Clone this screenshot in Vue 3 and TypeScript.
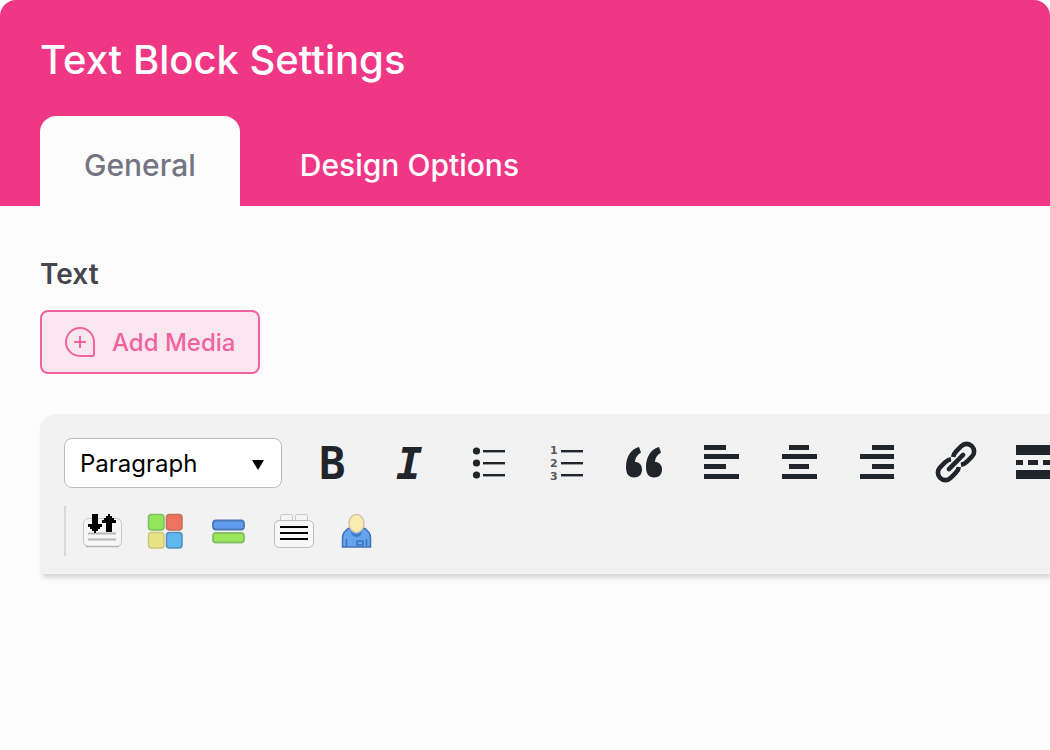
<script setup lang="ts">
import { ref } from 'vue'

const tabs: string[] = ['General', 'Design Options']
const activeTab = ref<string>('General')
const format = ref<string>('Paragraph')

interface Bar { x: number; y: number; w: number; h: number }
interface Tool { name: string; bars: Bar[] }

const lines = (xs: number[], ws: number[]): Bar[] =>
  xs.map((x, i) => ({ x, y: [7, 16, 26, 36][i], w: ws[i], h: 5 }))

const listLines: Bar[] = [12, 24, 36].map((y) => ({ x: 33, y, w: 22, h: 2.4 }))

const tools: Tool[] = [
  { name: 'Bold', bars: [] },
  { name: 'Italic', bars: [] },
  { name: 'Bulleted list', bars: listLines },
  { name: 'Numbered list', bars: listLines },
  { name: 'Blockquote', bars: [] },
  { name: 'Align left', bars: lines([20, 20, 20, 20], [22, 35, 22, 35]) },
  { name: 'Align center', bars: lines([27, 20, 27, 20], [20, 35, 20, 35]) },
  { name: 'Align right', bars: lines([32, 20, 32, 20], [22, 34, 22, 34]) },
  { name: 'Insert link', bars: [] },
  {
    name: 'Read more',
    bars: [
      { x: 20, y: 7, w: 38, h: 10 },
      { x: 20, y: 22, w: 7, h: 5 },
      { x: 32, y: 22, w: 10, h: 5 },
      { x: 47, y: 22, w: 11, h: 5 },
      { x: 20, y: 32, w: 38, h: 9 },
    ],
  },
]
</script>

<template>
  <main class="panel">
    <header class="head">
      <h1>Text Block Settings</h1>
      <nav class="tabs" role="tablist">
        <button
          v-for="tab in tabs"
          :key="tab"
          type="button"
          role="tab"
          class="tab"
          :class="{ active: tab === activeTab }"
          :aria-selected="tab === activeTab"
          @click="activeTab = tab"
        >{{ tab }}</button>
      </nav>
    </header>

    <section class="body">
      <h2>Text</h2>
      <button type="button" class="media">
        <svg width="32" height="32" viewBox="0 0 32 32" fill="none" stroke="currentColor" stroke-width="2" aria-hidden="true">
          <path d="M16 2a14 14 0 0 0 0 28h12a2 2 0 0 0 2-2V16A14 14 0 0 0 16 2z" />
          <path d="M16 10v12M10 16h12" />
        </svg>
        <span>Add Media</span>
      </button>

      <div class="toolbar" role="toolbar" aria-label="Text formatting">
        <div class="row">
          <div class="select">
            <select v-model="format" aria-label="Block format">
              <option>Paragraph</option>
              <option>Heading</option>
            </select>
            <svg class="caret" width="12" height="10" viewBox="0 0 12 10" aria-hidden="true"><path d="M0 0h12L6 10z" /></svg>
          </div>
          <button v-for="tool in tools" :key="tool.name" type="button" class="tool" :aria-label="tool.name">
            <svg width="78" height="50" viewBox="0 0 78 50" fill="#1f252b" aria-hidden="true">
              <rect v-for="(b, i) in tool.bars" :key="i" :x="b.x" :y="b.y" :width="b.w" :height="b.h" />
              <text v-if="tool.name === 'Bold'" x="25" y="41" class="letter">B</text>
              <text v-else-if="tool.name === 'Italic'" x="24" y="41" class="letter slanted">I</text>
              <g v-else-if="tool.name === 'Bulleted list'">
                <circle v-for="y in [13, 25, 37]" :key="y" cx="26.5" :cy="y" r="3.6" />
              </g>
              <g v-else-if="tool.name === 'Numbered list'" class="digits">
                <text x="22" y="16">1</text>
                <text x="22" y="29">2</text>
                <text x="22" y="42">3</text>
              </g>
              <g v-else-if="tool.name === 'Blockquote'">
                <path d="M33 9C25 11 20 19 20 29c0 7 3 10.500 8 10.500s8-3 8-8-3-7.500-7-7.500c0-4 2-7 6-9.500z" />
                <path d="M53 9C45 11 40 19 40 29c0 7 3 10.500 8 10.500s8-3 8-8-3-7.500-7-7.500c0-4 2-7 6-9.500z" />
              </g>
              <g v-else-if="tool.name === 'Insert link'" transform="translate(38 24) rotate(-45)" fill="none" stroke="#1f252b" stroke-width="4.600">
                <path d="M-1.500 -5.500Q-4 -7.500 -8 -7.500H-15a7.500 7.500 0 0 0 0 15h7Q-4 7.500 -1.500 5.500" />
                <path d="M1.500 -5.500Q4 -7.500 8 -7.500H15a7.500 7.500 0 0 1 0 15H8Q4 7.500 1.500 5.500" />
                <path d="M-10 0H10" stroke-linecap="round" />
              </g>
            </svg>
          </button>
        </div>

        <div class="row extras">
          <button type="button" class="extra" aria-label="Shortcodes">
            <svg width="64" height="50" viewBox="0 0 64 50" aria-hidden="true">
              <rect x="13.500" y="12.500" width="38" height="28" rx="5" fill="#f6f6f6" stroke="#c6c6c6" />
              <path d="M16 40.500h33" stroke="#b4b4b4" stroke-width="1.500" />
              <path d="M18 27.500h28M18 33.500h28" stroke="#b8b8b8" stroke-width="2" />
              <path d="M22 8h6v10h4v3h-2v2h-2v2h-2v2h-2v-2h-2v-2h-2v-2h-2v-3h4zM38 8h2v2h2v2h2v2h2v3h-4v9h-6v-9h-4v-3h2v-2h2v-2h2z" />
            </svg>
          </button>
          <button type="button" class="extra" aria-label="Blocks">
            <svg width="64" height="50" viewBox="0 0 64 50" stroke-width="1.500" aria-hidden="true">
              <rect x="14.500" y="8.500" width="15.500" height="15.500" rx="3" fill="#92e65a" stroke="#7fbd62" />
              <rect x="32.500" y="8.500" width="15.500" height="15.500" rx="3" fill="#ec7461" stroke="#c4705a" />
              <rect x="14.500" y="26.500" width="15.500" height="15.500" rx="3" fill="#e8e384" stroke="#cdc77c" />
              <rect x="32.500" y="26.500" width="15.500" height="15.500" rx="3" fill="#60b7ef" stroke="#5290ba" />
            </svg>
          </button>
          <button type="button" class="extra" aria-label="Dividers">
            <svg width="64" height="50" viewBox="0 0 64 50" stroke-width="1.800" aria-hidden="true">
              <rect x="15" y="14.500" width="31" height="9" rx="3" fill="#619bee" stroke="#4a78b8" />
              <rect x="15" y="27" width="31" height="9.500" rx="3" fill="#9be75b" stroke="#86bd66" />
            </svg>
          </button>
          <button type="button" class="extra" aria-label="Notes">
            <svg width="64" height="50" viewBox="0 0 64 50" aria-hidden="true">
              <path d="M18.500 15v-5q0-1.500 2-1.500h8q2 0 2 1.500v5M33.500 15v-5q0-1.500 2-1.500h8q2 0 2 1.500v5" fill="#f5f5f5" stroke="#cacaca" />
              <rect x="12.500" y="14.500" width="39" height="27" rx="5" fill="#f7f7f7" stroke="#bcbcbc" />
              <path d="M18 21h28M18 27h28M18 33h28" stroke="#000" stroke-width="2" />
            </svg>
          </button>
          <button type="button" class="extra" aria-label="User">
            <svg width="64" height="50" viewBox="0 0 64 50" stroke-width="1.500" aria-hidden="true">
              <path d="M22 22.500h17l4 4q1.500 2 1.500 6v8.500h-28v-8.500q0-4 1.500-6z" fill="#65a5ed" stroke="#3c74bb" />
              <path d="M20.500 33v7M40.500 33v7M31 35h6v4h-6z" fill="none" stroke="#3c74bb" />
              <path d="M24 23q6 10 13 0l-2 6q-4 4-9 0z" fill="#407dca" />
              <ellipse cx="30.500" cy="17.500" rx="7.500" ry="9" fill="#f6edaf" stroke="#d9bfa6" />
            </svg>
          </button>
        </div>
      </div>
    </section>
  </main>
</template>

<style>
body {
  margin: 0;
  background: #fcfcfc;
}
</style>

<style scoped>
.panel {
  min-height: 100vh;
  overflow: hidden;
  background: #fcfcfc;
  font-family: Inter, "Liberation Sans", sans-serif;
}
.panel * {
  box-sizing: border-box;
}
button {
  margin: 0;
  padding: 0;
  border: 0;
  background: none;
  font: inherit;
  cursor: pointer;
}
svg {
  display: block;
  flex: none;
}
.head {
  padding: 36px 40px 0;
  border-radius: 16px 16px 0 0;
  background: #f03786;
  color: #fff;
}
h1 {
  margin: 0 0 32px;
  font-size: 40px;
  line-height: 48px;
  font-weight: 500;
}
.tabs {
  display: flex;
  gap: 16px;
}
.tab {
  height: 90px;
  padding: 8px 44px 0;
  border-radius: 16px 16px 0 0;
  color: #fff;
  font-size: 30px;
  font-weight: 500;
}
.tab.active {
  background: #fcfcfc;
  color: #747482;
}
.body {
  padding: 50px 0 40px 40px;
}
h2 {
  margin: 0 0 18px;
  color: #45454d;
  font-size: 28px;
  line-height: 36px;
  font-weight: 600;
}
.media {
  display: flex;
  align-items: center;
  gap: 16px;
  min-width: 220px;
  height: 64px;
  margin-bottom: 40px;
  padding: 0 22px;
  border: 2px solid #f1639f;
  border-radius: 8px;
  background: #fae6ef;
  color: #f1639f;
  font-size: 24px;
  font-weight: 500;
}
.toolbar {
  display: flex;
  flex-direction: column;
  gap: 18px;
  padding: 24px 0 18px 24px;
  border-radius: 16px 0 0 4px;
  background: #f2f2f2;
  box-shadow: 2px 4px 4px rgba(0, 0, 0, 0.14);
}
.row {
  display: flex;
  overflow: hidden;
}
.select {
  position: relative;
  flex: none;
  width: 218px;
  margin-right: 12px;
}
select {
  display: block;
  width: 100%;
  height: 50px;
  padding: 0 40px 0 15px;
  border: 1px solid #bcbcbc;
  border-radius: 8px;
  appearance: none;
  background: #fff;
  color: #000;
  font: 400 24px Inter, "Liberation Sans", sans-serif;
}
.caret {
  position: absolute;
  top: 22px;
  right: 18px;
  pointer-events: none;
}
.tool,
.extra {
  flex: none;
}
.letter {
  font: 700 44px "DejaVu Sans Mono", monospace;
}
.slanted {
  font-style: italic;
}
.digits {
  font: 700 11px "DejaVu Sans", sans-serif;
  fill: #555a5e;
}
.extras {
  padding-left: 4px;
  border-left: 2px solid #d8d8d8;
}
</style>
